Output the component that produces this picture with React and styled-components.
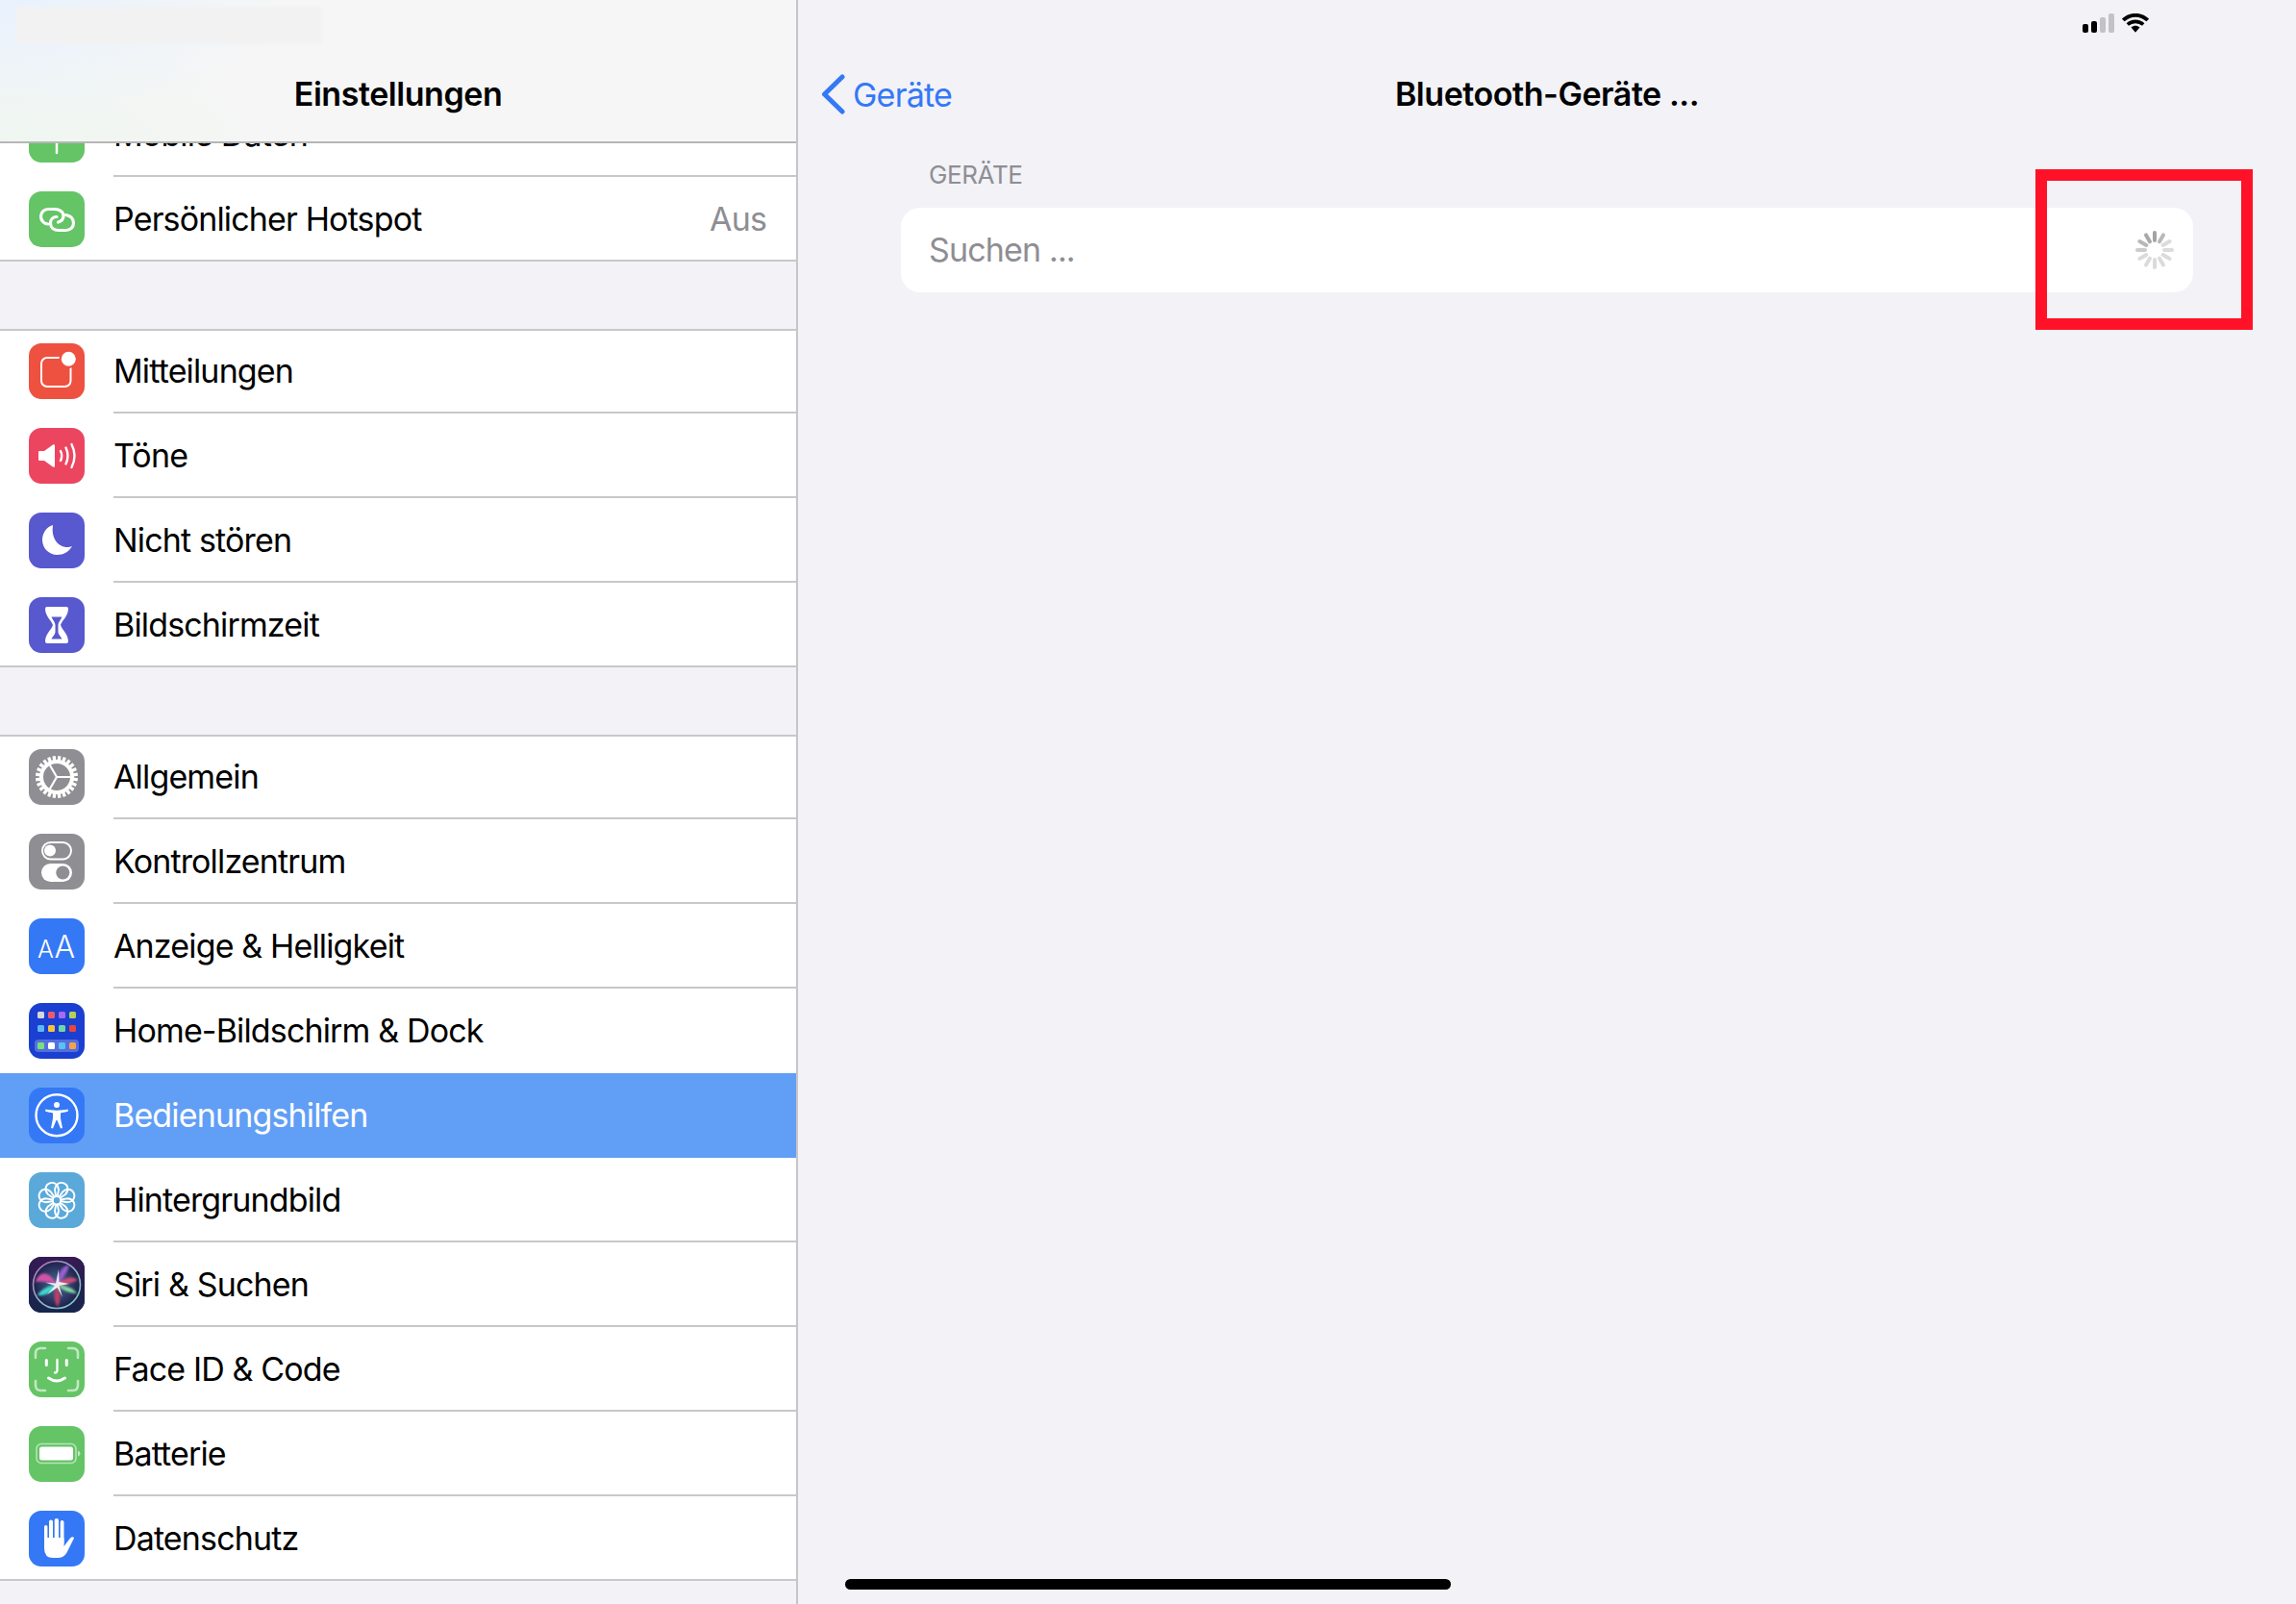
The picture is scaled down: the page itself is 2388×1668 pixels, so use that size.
import styled, { createGlobalStyle } from 'styled-components';

const GlobalStyle = createGlobalStyle`
  html, body { margin: 0; padding: 0; background: #f2f2f7; }
  body { font-family: Inter, "Liberation Sans", sans-serif; color: #000; }
  * { box-sizing: border-box; }
`;

const Screen = styled.div`
  position: relative;
  display: flex;
  width: 2388px;
  height: 1668px;
  overflow: hidden;
  background: #f2f2f7;
`;

const Sidebar = styled.aside`
  position: relative;
  flex: 0 0 830px;
  height: 100%;
  padding-top: 96px;
  border-right: 2px solid #c6c6c8;
  overflow: hidden;
`;

const SideNav = styled.header`
  position: absolute;
  top: 0;
  left: 0;
  right: 0;
  height: 149px;
  display: flex;
  align-items: center;
  justify-content: center;
  padding-top: 48px;
  border-bottom: 2px solid #b6b6b8;
  background:
    radial-gradient(ellipse 300px 130px at 0 0, #e8f2fd 0%, rgba(232, 242, 253, 0) 100%),
    radial-gradient(ellipse 320px 120px at 0 149px, #eff6f0 0%, rgba(239, 246, 240, 0) 100%),
    #f6f6f6;
`;

const BlurredStatus = styled.div`
  position: absolute;
  top: 7px;
  left: 17px;
  width: 318px;
  height: 39px;
  background: #f2f2f3;
  filter: blur(1px);
`;

const NavTitle = styled.h1`
  margin: 0;
  font-size: 34px;
  font-weight: 600;
  letter-spacing: -0.45px;
  line-height: 44px;
  color: #000;
`;

const Group = styled.section`
  margin-bottom: 70px;
  background: #fff;
  box-shadow: inset 0 2px 0 #c8c8ca, inset 0 -2px 0 #c8c8ca;
`;

const Row = styled.div`
  display: flex;
  align-items: center;
  gap: 30px;
  height: 88px;
  padding-left: 30px;
  background: ${({ $selected }) => ($selected ? '#619ef6' : 'transparent')};
  color: ${({ $selected }) => ($selected ? '#fff' : '#000')};
`;

const RowBody = styled.div`
  flex: 1;
  display: flex;
  align-items: center;
  justify-content: space-between;
  height: 100%;
  padding: 2px 31px 0 0;
  border-bottom: 2px solid ${({ $line }) => ($line ? '#c8c8ca' : 'transparent')};
`;

const RowLabel = styled.span`
  font-size: 34px;
  letter-spacing: -0.85px;
  line-height: 44px;
`;

const RowValue = styled(RowLabel)`
  color: #8e8e93;
`;

const IconTile = styled.span`
  flex: 0 0 58px;
  display: block;
  width: 58px;
  height: 58px;
  border-radius: 13px;
  overflow: hidden;
  background: ${({ $bg }) => $bg};

  svg {
    display: block;
    width: 58px;
    height: 58px;
  }
`;

const Detail = styled.main`
  flex: 1;
  display: flex;
  flex-direction: column;
  min-width: 0;
`;

const StatusBar = styled.div`
  display: flex;
  justify-content: flex-end;
  gap: 8px;
  height: 50px;
  padding: 14px 153px 0 0;
`;

const SignalBars = styled.div`
  display: flex;
  align-items: flex-end;
  gap: 3px;
  height: 20px;
`;

const SignalBar = styled.i`
  display: block;
  width: 6px;
  height: ${({ $h }) => $h}px;
  border-radius: 2px;
  background: ${({ $on }) => ($on ? '#000' : '#c2c2c7')};
`;

const Toolbar = styled.div`
  display: grid;
  grid-template-columns: 1fr auto 1fr;
  align-items: center;
  height: 96px;
`;

const BackLink = styled.a`
  display: flex;
  align-items: center;
  gap: 7px;
  padding-left: 24px;
  font-size: 34px;
  letter-spacing: -0.75px;
  color: #3478f6;
`;

const Section = styled.section`
  padding: 21px 107px 0;
`;

const SectionLabel = styled.div`
  height: 30px;
  margin-bottom: 19px;
  padding-left: 29px;
  font-size: 26px;
  line-height: 30px;
  letter-spacing: -0.4px;
  color: #8e8e93;
`;

const Card = styled.div`
  display: flex;
  align-items: center;
  justify-content: space-between;
  height: 88px;
  padding: 0 20px 0 29px;
  border-radius: 20px;
  background: #fff;
`;

const Annotation = styled.div`
  position: absolute;
  top: 176px;
  left: 2117px;
  width: 226px;
  height: 167px;
  border: 12px solid #ff1228;
`;

const HomeIndicator = styled.div`
  position: absolute;
  bottom: 15px;
  left: 50%;
  width: 630px;
  height: 11px;
  margin-left: -315px;
  border-radius: 6px;
  background: #000;
`;

const Glyph = ({ children }) => (
  <svg viewBox="0 0 58 58" fill="none">{children}</svg>
);

const Antenna = () => (
  <Glyph>
    <path d="M29 22v26" stroke="#fff" strokeWidth="2.500" strokeLinecap="round" />
  </Glyph>
);

const Hotspot = () => (
  <Glyph>
    <g stroke="#fff" strokeWidth="3.200" strokeLinecap="round">
      <path d="M20 34C15.500 34 12.500 30 12.500 26C12.500 21.500 16 18.500 20 18.500H27C32 18.500 36 21.500 36 25.500C36 28.500 34 31 30.500 32" />
      <path d="M38.500 24.500C44 25.500 46.500 29 46.500 33C46.500 37.500 43 40.500 38.500 40.500H31C26 40.500 22.500 37.500 22.500 33C22.500 29.500 25 26.500 29 26.500" />
    </g>
  </Glyph>
);

const Bell = () => (
  <Glyph>
    <rect x="13" y="15" width="30.500" height="30" rx="6" stroke="#fff" strokeWidth="2" />
    <circle cx="41.300" cy="16.300" r="10" fill="#ee5140" />
    <circle cx="41.300" cy="16.300" r="7.500" fill="#fff" />
  </Glyph>
);

const Speaker = () => (
  <Glyph>
    <path d="M11 24H16L25 17.500Q27 16.500 27 18.500V39.500Q27 41.500 25 40.500L16 34H11Q10 34 10 33V25Q10 24 11 24Z" fill="#fff" />
    <g stroke="#fff" strokeWidth="2.400" strokeLinecap="round">
      <path d="M33 24Q35.500 29 33 34" />
      <path d="M38.500 20.500Q42.500 29 38.500 37.500" />
      <path d="M44.500 17Q50.500 29 44.500 41" />
    </g>
  </Glyph>
);

const Moon = () => (
  <Glyph>
    <path d="M25 13C18 15 14 22 14 28.500C14 37 21 44 29.500 44C36 44 41.500 41 45 35C43 36 41 36.300 38.500 36C29.500 35 23 26 25 13Z" fill="#fff" />
  </Glyph>
);

const Hourglass = () => (
  <Glyph>
    <path d="M19 10H39Q41 10 41 12C41 20 34.500 24 33 29C34.500 34 41 38 41 46Q41 48 39 48H19Q17 48 17 46C17 38 23.500 34 25 29C23.500 24 17 20 17 12Q17 10 19 10Z" fill="#fff" />
    <path d="M23.500 20.500H34.500C33 24 30.500 26 30.500 29V36C30.500 39 33.500 41 34.500 43.500H23.500C24.500 41 27.500 39 27.500 36V29C27.500 26 25 24 23.500 20.500Z" fill="#5858cf" />
  </Glyph>
);

const Gear = () => (
  <Glyph>
    <circle cx="29" cy="29" r="16" stroke="#fff" strokeWidth="4" />
    {Array.from({ length: 24 }, (_, i) => (
      <path key={i} d="M29 12V7" stroke="#fff" strokeWidth="3.300" transform={`rotate(${i * 15 + 7.500} 29 29)`} />
    ))}
    <g stroke="#fff" strokeWidth="2.200">
      <path d="M29 29H44" />
      <path d="M29 29L21.500 16" />
      <path d="M29 29L21.500 42" />
    </g>
  </Glyph>
);

const Toggles = () => (
  <Glyph>
    <rect x="14" y="9" width="30" height="17.500" rx="8.700" stroke="#fff" strokeWidth="2" />
    <circle cx="22" cy="17.500" r="6" fill="#fff" />
    <rect x="13" y="31" width="32" height="19" rx="9.500" fill="#fff" />
    <circle cx="35.300" cy="40.500" r="7" fill="#8e8e93" />
  </Glyph>
);

const TextSize = () => (
  <Glyph>
    <text x="9" y="41" fill="#fff" fontFamily="Inter, sans-serif" fontSize="25" fontWeight="300">A</text>
    <text x="26.500" y="41" fill="#fff" fontFamily="Inter, sans-serif" fontSize="32" fontWeight="300">A</text>
  </Glyph>
);

const homeDots = [
  { y: 9, colors: ['#d7d7d7', '#ee5a6b', '#a76af0', '#b4d250'] },
  { y: 23, colors: ['#5ab8f5', '#f6c13c', '#6fd6a5', '#e8453c'] },
  { y: 41, colors: ['#77e07a', '#ffffff', '#58c2f5', '#f2a24f'] },
];

const HomeGrid = () => (
  <Glyph>
    <rect x="6" y="38" width="46" height="13" rx="4" fill="#fff" fillOpacity=".25" />
    {homeDots.map((row) =>
      row.colors.map((color, i) => (
        <rect key={color} x={9 + i * 11} y={row.y} width="7" height="7" rx="1.500" fill={color} />
      )),
    )}
  </Glyph>
);

const Person = () => (
  <Glyph>
    <circle cx="29" cy="28.700" r="21.500" stroke="#fff" strokeWidth="2.400" />
    <circle cx="29" cy="18" r="3" fill="#fff" />
    <path d="M17.500 22.500C23 24 35 24 40.500 22.500L41 24.500C38 25.500 35 26 33 26.500V32L35 42L33 42.600L29.500 34H28.500L25 42.600L23 42L25 32V26.500C23 26 20 25.500 17 24.500Z" fill="#fff" />
  </Glyph>
);

const Flower = () => (
  <Glyph>
    {Array.from({ length: 8 }, (_, i) => (
      <g key={i} transform={`rotate(${i * 45 + 22.500} 29 29.300)`}>
        <path d="M29 29.300L23 20C21 14 24.500 10 29 10C33.500 10 37 14 35 20Z" stroke="#fff" strokeWidth="1.900" strokeLinejoin="round" />
      </g>
    ))}
    <circle cx="29" cy="29.300" r="4" fill="#5aa9d9" stroke="#fff" strokeWidth="1.600" />
  </Glyph>
);

const Siri = () => (
  <Glyph>
    <defs>
      <linearGradient id="siriBg" x1="0" y1="0" x2="0" y2="1">
        <stop offset="0" stopColor="#361a54" />
        <stop offset="1" stopColor="#16264c" />
      </linearGradient>
      <radialGradient id="siriGlow" cx=".5" cy=".5" r=".5">
        <stop offset="0" stopColor="#4a6f94" />
        <stop offset="1" stopColor="#1e1f4c" />
      </radialGradient>
      <linearGradient id="siriRing" x1="0" y1="0" x2="1" y2="1">
        <stop offset="0" stopColor="#b46bb0" />
        <stop offset=".5" stopColor="#8fb4c4" />
        <stop offset="1" stopColor="#6fd0c0" />
      </linearGradient>
      <filter id="siriSoft" x="-10%" y="-10%" width="120%" height="120%">
        <feGaussianBlur stdDeviation="1.300" />
      </filter>
      <clipPath id="siriClip">
        <circle cx="29" cy="29" r="24" />
      </clipPath>
    </defs>
    <rect width="58" height="58" fill="url(#siriBg)" />
    <circle cx="29" cy="29" r="24.500" fill="url(#siriGlow)" stroke="url(#siriRing)" strokeWidth="1.600" />
    <g clipPath="url(#siriClip)" filter="url(#siriSoft)">
      <path d="M29 29C20 12 10 16 7 26C14 25 22 26 29 29Z" fill="#d052a8" />
      <path d="M29 29C30 16 36 8 42 9C40 16 35 24 29 29Z" fill="#9a5fd0" />
      <path d="M29 29C38 20 46 20 51 24C44 28 36 30 29 29Z" fill="#c84d78" />
      <path d="M29 29C38 30 46 32 50 38C42 38 34 34 29 29Z" fill="#82dca4" />
      <path d="M29 29C20 30 12 34 9 40C18 41 25 36 29 29Z" fill="#3fd8cf" />
      <path d="M29 29C33 36 34 44 30 52C25 46 26 36 29 29Z" fill="#b8406a" />
    </g>
    <path d="M31 13L31.500 26L42 28L31.500 30L35 42L29.500 32L19 39L27 30L17 26.500L28 27.500Z" fill="#fff" fillOpacity=".85" />
  </Glyph>
);

const FaceId = () => (
  <Glyph>
    <g stroke="#fff" strokeOpacity=".6" strokeWidth="2.600" strokeLinecap="round">
      <path d="M7 17V12.500Q7 7 12.500 7H17" />
      <path d="M41 7H45.500Q51 7 51 12.500V17" />
      <path d="M51 41V45.500Q51 51 45.500 51H41" />
      <path d="M17 51H12.500Q7 51 7 45.500V41" />
    </g>
    <g stroke="#fff" strokeWidth="3" strokeLinecap="round">
      <path d="M18.300 19.500V24.500" />
      <path d="M39.300 19.500V24.500" />
    </g>
    <path d="M29.500 19V29.500Q29.500 32.500 27 32.500" stroke="#fff" strokeWidth="2.300" strokeLinecap="round" />
    <path d="M20.500 38Q29 44 37.500 38" stroke="#fff" strokeWidth="3" strokeLinecap="round" />
  </Glyph>
);

const Battery = () => (
  <Glyph>
    <rect x="8" y="18.500" width="41" height="20" rx="5" stroke="#fff" strokeOpacity=".55" strokeWidth="1.500" />
    <rect x="11" y="21.500" width="35" height="14" rx="2.500" fill="#fff" />
    <path d="M51 25.500Q53.500 26.500 53.500 28.500Q53.500 30.500 51 31.500Z" fill="#fff" fillOpacity=".6" />
  </Glyph>
);

const Hand = () => (
  <Glyph>
    <g fill="#fff">
      <rect x="16" y="15" width="3.400" height="22" rx="1.700" />
      <rect x="21" y="9.500" width="4" height="26" rx="2" />
      <rect x="26.700" y="8" width="4.300" height="27" rx="2.100" />
      <rect x="32.700" y="10" width="3.800" height="26" rx="1.900" />
      <path d="M16 28H36.500V37L43 28.500Q46 26 47 28.500L39.500 43.500Q36.500 49 29.500 49H25Q16 49 16 39Z" />
    </g>
  </Glyph>
);

const groups = [
  [
    { label: 'Mobile Daten', bg: '#65c466', icon: Antenna },
    { label: 'Persönlicher Hotspot', bg: '#65c466', icon: Hotspot, value: 'Aus' },
  ],
  [
    { label: 'Mitteilungen', bg: '#ee5140', icon: Bell },
    { label: 'Töne', bg: '#ec4560', icon: Speaker },
    { label: 'Nicht stören', bg: '#5858cf', icon: Moon },
    { label: 'Bildschirmzeit', bg: '#5858cf', icon: Hourglass },
  ],
  [
    { label: 'Allgemein', bg: '#8e8e93', icon: Gear },
    { label: 'Kontrollzentrum', bg: '#8e8e93', icon: Toggles },
    { label: 'Anzeige & Helligkeit', bg: '#3478f6', icon: TextSize },
    { label: 'Home-Bildschirm & Dock', bg: '#1b3fd0', icon: HomeGrid },
    { label: 'Bedienungshilfen', bg: '#3478f6', icon: Person, selected: true },
    { label: 'Hintergrundbild', bg: '#5aa9d9', icon: Flower },
    { label: 'Siri & Suchen', bg: '#1d1c44', icon: Siri },
    { label: 'Face ID & Code', bg: '#65c466', icon: FaceId },
    { label: 'Batterie', bg: '#65c466', icon: Battery },
    { label: 'Datenschutz', bg: '#3478f6', icon: Hand },
  ],
];

const spokes = [0.36, 0.28, 0.14, 0.14, 0.14, 0.14, 0.14, 0.14, 0.14, 0.2, 0.28, 0.34];

const Spinner = () => (
  <svg width="40" height="40" viewBox="0 0 40 40">
    {spokes.map((opacity, i) => (
      <path
        key={i}
        d="M20 2V10"
        stroke="#000"
        strokeOpacity={opacity}
        strokeWidth="4"
        strokeLinecap="round"
        transform={`rotate(${i * 30} 20 20)`}
      />
    ))}
  </svg>
);

const Wifi = () => (
  <svg width="28" height="20" viewBox="0 0 28 20" fill="none">
    <path d="M1.300 7C8.500 0 19.500 0 26.700 7" stroke="#000" strokeWidth="3.800" />
    <path d="M5.800 11.500C10.500 7.300 17.500 7.300 22.200 11.500" stroke="#000" strokeWidth="3.600" />
    <path d="M9.500 14.500L14 19.800L18.500 14.500C15.800 12.300 12.200 12.300 9.500 14.500Z" fill="#000" />
  </svg>
);

const App = () => {
  return (
    <Screen>
      <GlobalStyle />
      <Sidebar>
        {groups.map((items, g) => (
          <Group key={g}>
            {items.map((item, i) => {
              const Icon = item.icon;
              const next = items[i + 1];
              return (
                <Row key={item.label} $selected={item.selected}>
                  <IconTile $bg={item.bg}><Icon /></IconTile>
                  <RowBody $line={next && !next.selected && !item.selected}>
                    <RowLabel>{item.label}</RowLabel>
                    {item.value && <RowValue>{item.value}</RowValue>}
                  </RowBody>
                </Row>
              );
            })}
          </Group>
        ))}
        <SideNav>
          <BlurredStatus />
          <NavTitle>Einstellungen</NavTitle>
        </SideNav>
      </Sidebar>

      <Detail>
        <StatusBar>
          <SignalBars>
            <SignalBar $h={9} $on />
            <SignalBar $h={12} $on />
            <SignalBar $h={16} />
            <SignalBar $h={20} />
          </SignalBars>
          <Wifi />
        </StatusBar>
        <Toolbar>
          <BackLink>
            <svg width="26" height="42" viewBox="0 0 26 42" fill="none">
              <path d="M22 3L3.500 21L22 39" stroke="#3478f6" strokeWidth="5" strokeLinecap="round" strokeLinejoin="round" />
            </svg>
            Geräte
          </BackLink>
          <NavTitle>Bluetooth-Geräte ...</NavTitle>
          <span />
        </Toolbar>
        <Section>
          <SectionLabel>GERÄTE</SectionLabel>
          <Card>
            <RowValue>Suchen ...</RowValue>
            <Spinner />
          </Card>
        </Section>
      </Detail>

      <Annotation />
      <HomeIndicator />
    </Screen>
  );
};

export default App;
